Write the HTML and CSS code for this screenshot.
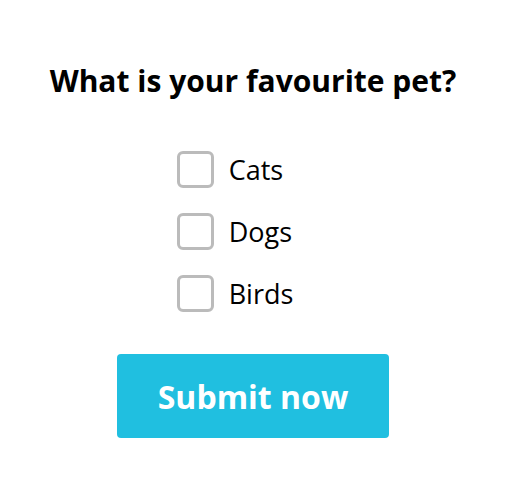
FILE: index.html
```html
<!DOCTYPE html>
<html lang="en">
<head>
  <meta charset="UTF-8" />
  <title>Pet Poll</title>
  <link rel="stylesheet" href="styles.css">
</head>
<body>
  <form class="poll">
    <h1>What is your favourite pet?</h1>

    <div class="options">
      <label class="option">
        <input type="checkbox" name="pet" value="cats" />
        <span class="box"></span>
        <span class="text">Cats</span>
      </label>
      <label class="option">
        <input type="checkbox" name="pet" value="dogs" />
        <span class="box"></span>
        <span class="text">Dogs</span>
      </label>
      <label class="option">
        <input type="checkbox" name="pet" value="birds" />
        <span class="box"></span>
        <span class="text">Birds</span>
      </label>
    </div>

    <button type="submit">Submit now</button>
  </form>
</body>
</html>
```

FILE: styles.css
```css
* {
  margin: 0;
  padding: 0;
  box-sizing: border-box;
}

html, body {
  background: #fff;
  font-family: 'Open Sans', sans-serif;
  color: #000;
}

.poll {
  display: flex;
  flex-direction: column;
  align-items: center;
  padding-top: 60px;
}

h1 {
  font-size: 30px;
  font-weight: 700;
  line-height: 41px;
  margin-bottom: 50px;
}

.options {
  display: flex;
  flex-direction: column;
  gap: 25px;
  padding-right: 40px;
  margin-left: 4px;
  margin-bottom: 42px;
}

.option {
  display: flex;
  align-items: center;
  gap: 15px;
  height: 37px;
  cursor: pointer;
}

.option input {
  display: none;
}

.box {
  width: 37px;
  height: 37px;
  border: 3px solid #bbb;
  border-radius: 6px;
  background: #fff;
}

.option input:checked + .box {
  background: #20bfe0;
  border-color: #20bfe0;
}

.text {
  font-size: 27px;
  line-height: 37px;
}

button {
  width: 272px;
  height: 84px;
  background-color: #20bfe0;
  color: #fff;
  border: none;
  border-radius: 4px;
  font-family: 'Open Sans', sans-serif;
  font-size: 32px;
  font-weight: 700;
  cursor: pointer;
}
```
